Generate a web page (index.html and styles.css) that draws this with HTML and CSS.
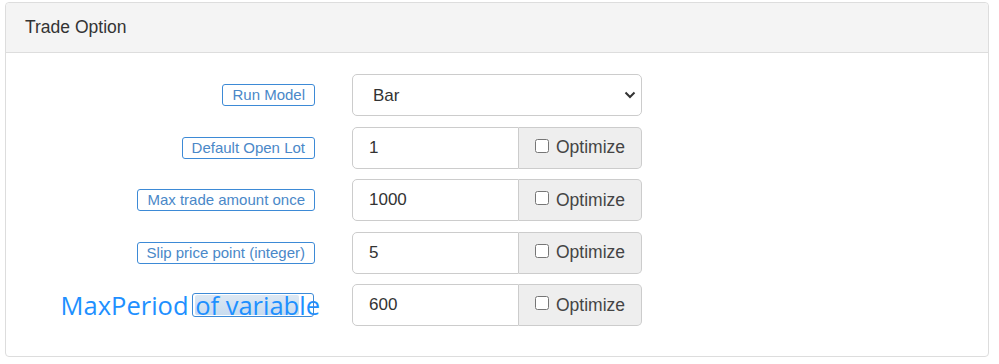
FILE: index.html
```html
<!DOCTYPE html>
<html>
<head>
<meta charset="utf-8">
<link rel="stylesheet" href="styles.css">
</head>
<body>
<div class="panel">
  <div class="panel-heading">Trade Option</div>
  <div class="panel-body">
    <div class="form-grid">
      <div class="label-cell"><span class="tag">Run Model</span></div>
      <div class="select-wrap">
        <select class="control select"><option>Bar</option></select>
        <svg class="chev" width="12" height="8" viewBox="0 0 12 8"><path d="M1.5 1.5 L6 6 L10.5 1.5" fill="none" stroke="#333" stroke-width="2"/></svg>
      </div>

      <div class="label-cell"><span class="tag">Default Open Lot</span></div>
      <div class="group">
        <input class="control input" value="1">
        <label class="addon"><input type="checkbox"> Optimize</label>
      </div>

      <div class="label-cell"><span class="tag">Max trade amount once</span></div>
      <div class="group">
        <input class="control input" value="1000">
        <label class="addon"><input type="checkbox"> Optimize</label>
      </div>

      <div class="label-cell"><span class="tag">Slip price point (integer)</span></div>
      <div class="group">
        <input class="control input" value="5">
        <label class="addon"><input type="checkbox"> Optimize</label>
      </div>

      <div class="label-cell"><span class="tag-big"><span class="big-text">MaxPeriod <span class="hl">of variab</span>le</span></span></div>
      <div class="group">
        <input class="control input" value="600">
        <label class="addon"><input type="checkbox"> Optimize</label>
      </div>
    </div>
  </div>
</div>
</body>
</html>
```
FILE: styles.css
```css
html, body { margin: 0; padding: 0; background: #fff; }
body {
  font-family: "Liberation Sans", Arial, sans-serif;
  color: #333;
  padding: 2px 10px 0 5px;
}
.panel {
  border: 1px solid #ddd;
  border-radius: 4px;
  height: 355px;
  box-sizing: border-box;
}
.panel-heading {
  height: 50px;
  box-sizing: border-box;
  background: #f4f4f4;
  border-bottom: 1px solid #ddd;
  border-radius: 4px 4px 0 0;
  padding: 14px 19px 0;
  font-size: 17.5px;
  line-height: 20px;
  color: #333;
}
.panel-body { padding: 21px 0 0 0; }
.form-grid {
  display: grid;
  grid-template-columns: 309px 290px;
  column-gap: 37px;
  grid-auto-rows: 42px;
  row-gap: 10.5px;
}
.label-cell {
  display: flex;
  justify-content: flex-end;
  align-items: center;
}
.tag {
  display: inline-block;
  border: 1px solid #3d8ad6;
  border-radius: 3px;
  color: #4a88c8;
  font-size: 15px;
  line-height: 18px;
  padding: 1px 9px;
  white-space: nowrap;
}
.tag-big {
  position: relative;
  width: 122px;
  height: 24px;
  box-sizing: border-box;
  display: flex;
  justify-content: flex-end;
  align-items: center;
  margin-right: 1px;
  white-space: nowrap;
}
.tag-big::after {
  content: "";
  position: absolute;
  inset: 0;
  border: 1px solid #3d8ad6;
  border-radius: 3px;
  pointer-events: none;
}
.big-text {
  font-family: "Open Sans", "Noto Sans", sans-serif;
  font-size: 25.5px;
  color: #1e90ff;
  line-height: 24px;
  margin-right: -6px;
  flex-shrink: 0;
}
.hl {
  display: inline-block;
  height: 20px;
  line-height: 20px;
  background: linear-gradient(to bottom, #dde8f3, #c9dcef);
  border-radius: 2px;
}
.control {
  box-sizing: border-box;
  height: 42px;
  border: 1px solid #ccc;
  font-family: "Liberation Sans", Arial, sans-serif;
  font-size: 17px;
  color: #333;
  background: #fff;
  margin: 0;
}
.select-wrap { position: relative; }
.select {
  width: 100%;
  border-radius: 5px;
  padding: 0 20px;
  appearance: none;
  -webkit-appearance: none;
}
.chev { position: absolute; right: 6px; top: 17px; }
.group { display: flex; }
.input {
  width: 167px;
  border-radius: 5px 0 0 5px;
  padding: 0 16px;
  outline: none;
}
.addon {
  flex: 1;
  display: flex;
  align-items: center;
  box-sizing: border-box;
  height: 42px;
  background: #eee;
  border: 1px solid #ccc;
  border-left: none;
  border-radius: 0 5px 5px 0;
  padding-left: 16px;
  font-size: 17.5px;
  color: #444;
  gap: 7px;
}
.addon input {
  width: 14px;
  height: 14px;
  margin: 0;
  position: relative;
  top: -2px;
}
```
